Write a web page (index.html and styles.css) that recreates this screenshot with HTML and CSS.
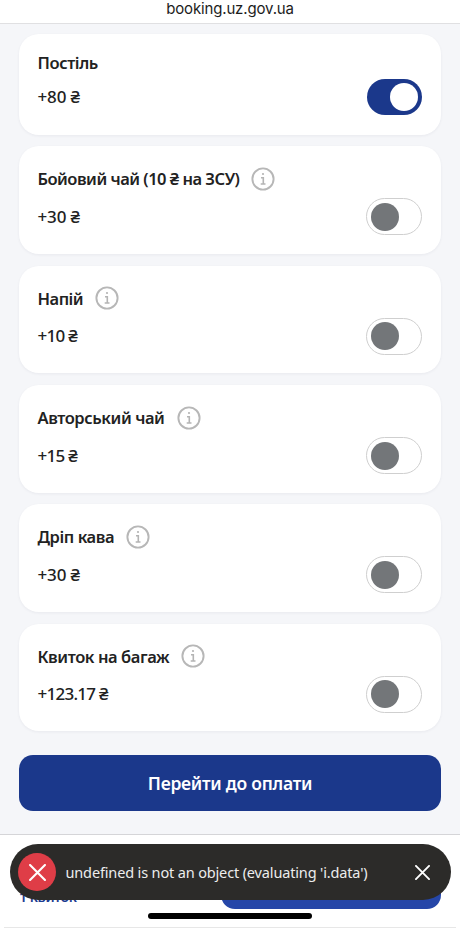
FILE: index.html
```html
<!DOCTYPE html>
<html lang="uk">
<head>
<meta charset="utf-8">
<title>booking.uz.gov.ua</title>
<link rel="stylesheet" href="styles.css">
</head>
<body>
<svg class="defs" aria-hidden="true">
  <symbol id="info" viewBox="0 0 24 24">
    <circle cx="12" cy="12" r="10.6" fill="none" stroke="#b7b7b7" stroke-width="1.9"/>
    <circle cx="12" cy="7" r="1.1" fill="#b4b4b4"/>
    <path d="M10 10.7h2.3v6M9.7 17h4.8" fill="none" stroke="#b4b4b4" stroke-width="1.6"/>
  </symbol>
  <symbol id="cross" viewBox="0 0 16 16">
    <path d="M1 1l14 14M15 1L1 15" fill="none" stroke="#fff" stroke-width="2" stroke-linecap="round"/>
  </symbol>
</svg>
<header class="address"><span>booking.uz.gov.ua</span></header>
<main class="services">
  <section class="card card-plain">
    <div class="title"><span>Постіль</span></div>
    <div class="row"><span class="price">+80 ₴</span><span class="switch on"></span></div>
  </section>
  <section class="card">
    <div class="title"><span class="long">Бойовий чай (10 ₴ на ЗСУ)</span><svg class="info"><use href="#info"/></svg></div>
    <div class="row"><span class="price">+30 ₴</span><span class="switch"></span></div>
  </section>
  <section class="card">
    <div class="title"><span class="long">Напій</span><svg class="info"><use href="#info"/></svg></div>
    <div class="row"><span class="price narrow">+10 ₴</span><span class="switch"></span></div>
  </section>
  <section class="card">
    <div class="title"><span>Авторський чай</span><svg class="info"><use href="#info"/></svg></div>
    <div class="row"><span class="price narrow">+15 ₴</span><span class="switch"></span></div>
  </section>
  <section class="card">
    <div class="title"><span>Дріп кава</span><svg class="info"><use href="#info"/></svg></div>
    <div class="row"><span class="price">+30 ₴</span><span class="switch"></span></div>
  </section>
  <section class="card">
    <div class="title"><span>Квиток на багаж</span><svg class="info"><use href="#info"/></svg></div>
    <div class="row"><span class="price narrow">+123.17 ₴</span><span class="switch"></span></div>
  </section>
  <button class="pay"><span>Перейти до оплати</span></button>
</main>
<footer class="summary">
  <span class="tickets">1 квиток</span>
  <span class="continue"></span>
  <div class="toast">
    <span class="badge"><svg class="cross-badge"><use href="#cross"/></svg></span>
    <span class="message">undefined is not an object (evaluating 'i.data')</span>
    <svg class="cross-close"><use href="#cross"/></svg>
  </div>
  <div class="home"></div>
</footer>
</body>
</html>
```
FILE: styles.css
```css
* { box-sizing: border-box; }
body {
  margin: 0;
  width: 460px;
  height: 928px;
  overflow: hidden;
  display: flex;
  flex-direction: column;
  background: #f5f6f9;
  color: #222;
  font-family: "Noto Sans", sans-serif;
}
.defs { position: absolute; width: 0; height: 0; }
.address {
  height: 24px;
  flex: none;
  background: #fff;
  border-bottom: 1px solid #e0e0e2;
  text-align: center;
  font: 400 15px/17px Inter, sans-serif;
  letter-spacing: -.15px;
  color: #1c1c1c;
}
.services {
  height: 810px;
  flex: none;
  padding: 9.5px 19px 0;
  display: flex;
  flex-direction: column;
  gap: 11.8px;
}
.card {
  height: 107.6px;
  flex: none;
  padding: 20.5px 19px 0 18.5px;
  border-radius: 20px;
  background: #fff;
  box-shadow: 0 1px 3px rgba(30, 30, 60, .06);
}
.card-plain { height: 101px; padding-top: 17px; }
.title {
  height: 24px;
  display: flex;
  align-items: center;
  gap: 12px;
  font-size: 16.5px;
  font-weight: 600;
  line-height: 24px;
  letter-spacing: -.42px;
  white-space: nowrap;
}
.title span { padding-top: 1px; }
.title .long { letter-spacing: -.5px; }
.info { width: 24px; height: 24px; flex: none; }
.row {
  height: 38px;
  margin-top: 7px;
  display: flex;
  align-items: center;
  justify-content: space-between;
}
.card-plain .row { margin-top: 3.5px; }
.price { font-size: 17px; font-weight: 500; line-height: 24px; letter-spacing: -.15px; white-space: nowrap; }
.price.narrow { letter-spacing: -.73px; }
.switch {
  width: 56px;
  height: 37px;
  padding: 3.5px 4px;
  border: 1px solid #cfcfcf;
  border-radius: 19px;
  background: #fff;
}
.switch::before {
  content: "";
  display: block;
  width: 28px;
  height: 28px;
  border-radius: 50%;
  background: #737679;
}
.switch.on { width: 55px; height: 36px; padding: 4px; border: 0; background: #1b388b; }
.switch.on::before { margin-left: auto; background: #fff; }
.pay {
  height: 56px;
  flex: none;
  margin-top: 11.5px;
  padding: 0;
  border: 0;
  border-radius: 14px;
  background: #1b388b;
  color: #fff;
  font: 600 17.5px/56px "Noto Sans", sans-serif;
  letter-spacing: -.25px;
}
.summary {
  position: relative;
  height: 94px;
  flex: none;
  display: flex;
  align-items: flex-start;
  justify-content: space-between;
  padding: 0 19px;
  background: #fff;
  border-top: 1px solid #d5d5d8;
}
.summary::after {
  content: "";
  position: absolute;
  left: 4px;
  right: 4px;
  bottom: 0;
  height: 1px;
  background: #e7e7e7;
}
.tickets { margin-top: 52px; font-size: 14px; line-height: 20px; font-weight: 600; letter-spacing: -.4px; color: #1d3c91; }
.continue { width: 220px; height: 44px; margin-top: 30px; border-radius: 14px; background: #2546a8; }
.toast {
  position: absolute;
  left: 9.5px;
  top: 9px;
  width: 441px;
  height: 56px;
  padding: 0 21px 0 8.5px;
  display: flex;
  align-items: center;
  border-radius: 28px;
  background: #2c2b29;
  color: #ededed;
}
.badge {
  width: 38px;
  height: 38px;
  flex: none;
  display: grid;
  place-items: center;
  border-radius: 50%;
  background: #df3d47;
}
.cross-badge { width: 17px; height: 17px; }
.cross-close { width: 15px; height: 15px; margin-left: auto; }
.message { margin-left: 9.5px; font-size: 14.5px; line-height: 24px; letter-spacing: -.15px; white-space: nowrap; }
.home {
  position: absolute;
  left: 148px;
  top: 78px;
  width: 164px;
  height: 6px;
  border-radius: 3px;
  background: #000;
}
```
